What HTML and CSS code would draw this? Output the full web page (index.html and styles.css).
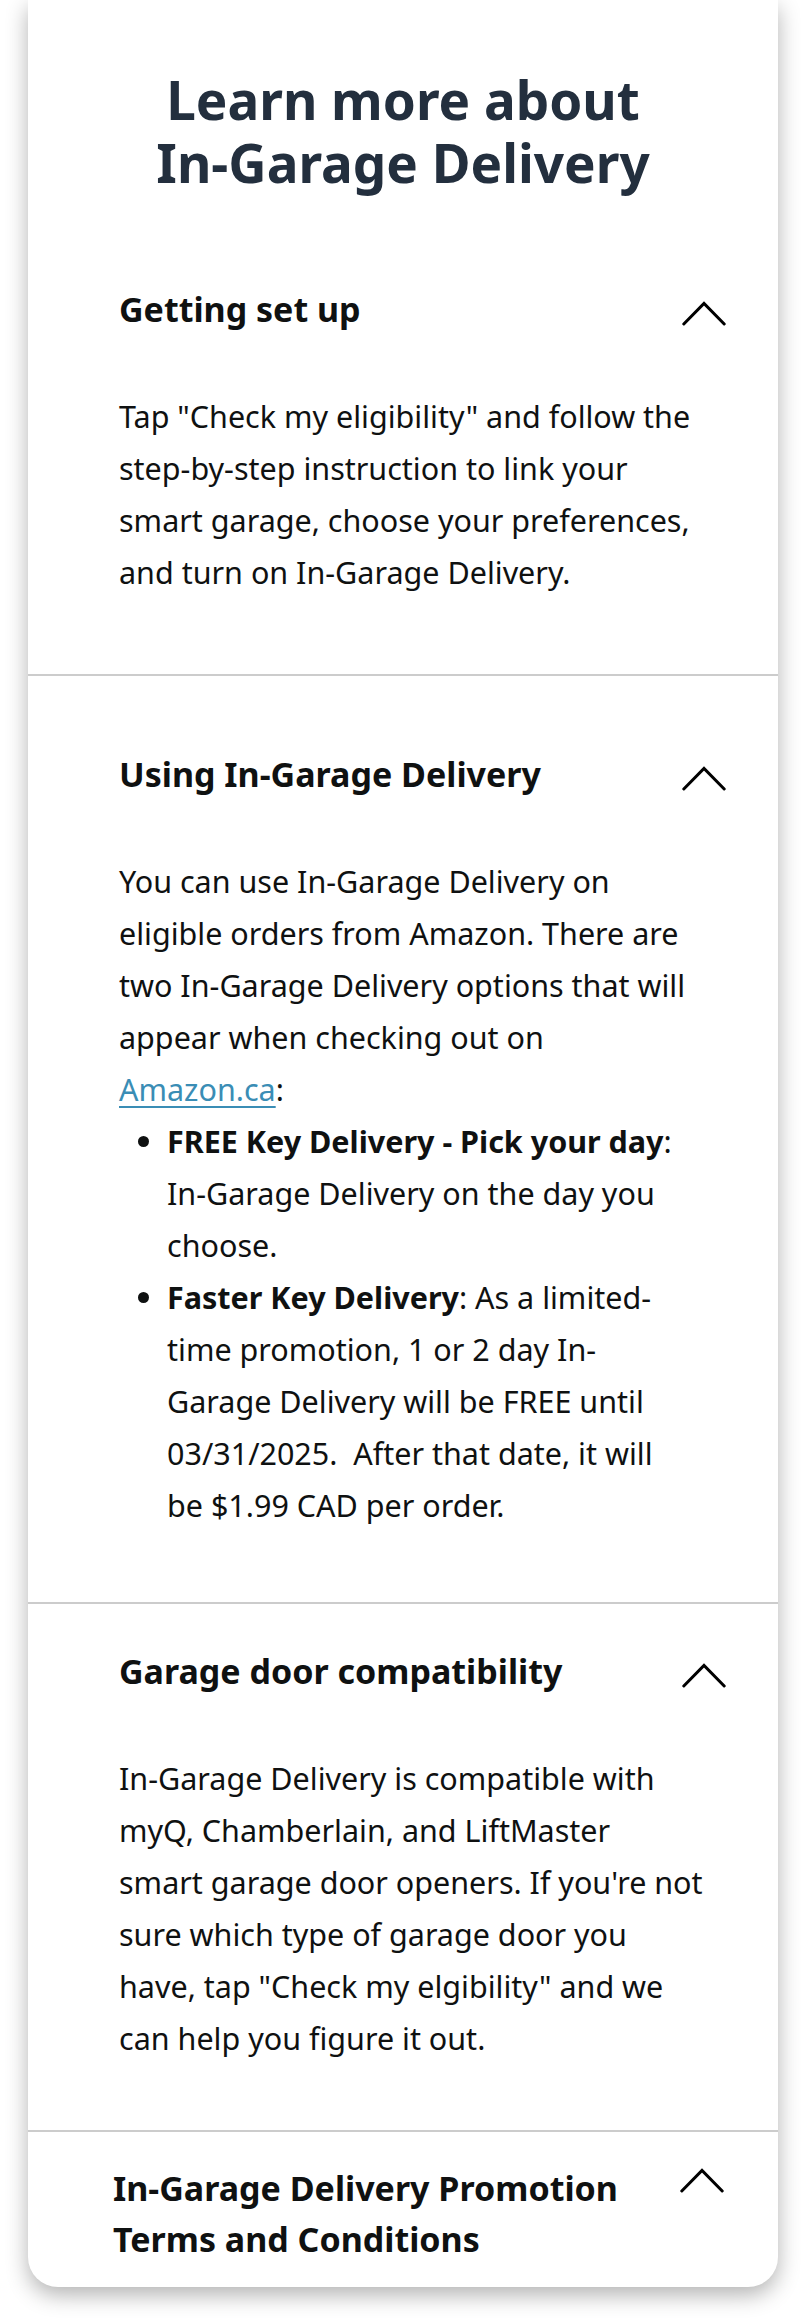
FILE: index.html
```html
<!DOCTYPE html>
<html lang="en">
<head>
<meta charset="utf-8">
<title>Learn more about In-Garage Delivery</title>
<link rel="stylesheet" href="styles.css">
</head>
<body>
<main class="card">
  <h1 class="title">Learn more about In-Garage Delivery</h1>

  <section class="faq faq--first">
    <div class="faq-head">
      <h2 class="faq-title">Getting set up</h2>
      <svg class="chevron" viewBox="0 0 44 25" width="44" height="25" aria-hidden="true"><polyline points="1.8,23 22,2.5 42.2,23"/></svg>
    </div>
    <p class="faq-body">Tap "Check my eligibility" and follow the<br>step-by-step instruction to link your<br>smart garage, choose your preferences,<br>and turn on In-Garage Delivery.</p>
  </section>

  <section class="faq faq--second">
    <div class="faq-head">
      <h2 class="faq-title">Using In-Garage Delivery</h2>
      <svg class="chevron" viewBox="0 0 44 25" width="44" height="25" aria-hidden="true"><polyline points="1.8,23 22,2.5 42.2,23"/></svg>
    </div>
    <div class="faq-body">
      <p>You can use In-Garage Delivery on<br>eligible orders from Amazon. There are<br>two In-Garage Delivery options that will<br>appear when checking out on<br><a class="link" href="#">Amazon.ca</a>:</p>
      <ul class="options">
        <li><b>FREE Key Delivery - Pick your day</b>:<br>In-Garage Delivery on the day you<br>choose.</li>
        <li><b>Faster Key Delivery</b>: As a limited-<br>time promotion, 1 or 2 day In-<br>Garage Delivery will be FREE until<br>03/31/2025.&nbsp; After that date, it will<br>be $1.99 CAD per order.</li>
      </ul>
    </div>
  </section>

  <section class="faq faq--third">
    <div class="faq-head">
      <h2 class="faq-title">Garage door compatibility</h2>
      <svg class="chevron" viewBox="0 0 44 25" width="44" height="25" aria-hidden="true"><polyline points="1.8,23 22,2.5 42.2,23"/></svg>
    </div>
    <p class="faq-body">In-Garage Delivery is compatible with<br>myQ, Chamberlain, and LiftMaster<br>smart garage door openers. If you're not<br>sure which type of garage door you<br>have, tap "Check my elgibility" and we<br>can help you figure it out.</p>
  </section>

  <section class="faq faq--last">
    <div class="faq-head">
      <h2 class="faq-title">In-Garage Delivery Promotion Terms and Conditions</h2>
      <svg class="chevron" viewBox="0 0 44 25" width="44" height="25" aria-hidden="true"><polyline points="1.8,23 22,2.5 42.2,23"/></svg>
    </div>
  </section>
</main>
</body>
</html>
```
FILE: styles.css
```css
html, body {
  margin: 0;
  padding: 0;
  background: #ffffff;
}

body {
  font-family: "Noto Sans", "Open Sans", sans-serif;
  color: #0f1111;
  padding-bottom: 37px;
}

.card {
  margin: 0 28px;
  background: #ffffff;
  border-radius: 0 0 30px 30px;
  box-shadow: 0 8px 22px rgba(0, 0, 0, 0.3);
}

.title {
  margin: 0;
  padding: 68px 100px 0;
  text-align: center;
  font-size: 53px;
  line-height: 63px;
  font-weight: 700;
  color: #232f3e;
}

.faq {
  padding: 0 52px 0 91px;
}

.faq + .faq {
  border-top: 2px solid #cccccc;
}

.faq--first { padding-top: 90px; padding-bottom: 76px; }
.faq--second { padding-top: 73px; padding-bottom: 71px; }
.faq--third { padding-top: 42px; padding-bottom: 66px; }
.faq--last { padding: 31px 54px 22px 85px; }

.faq-head {
  display: flex;
  justify-content: space-between;
  align-items: flex-start;
  gap: 24px;
}

.faq-title {
  margin: 0;
  font-size: 34px;
  line-height: 51px;
  font-weight: 700;
  color: #0f1111;
}

.chevron {
  flex: none;
  margin-top: 17px;
  fill: none;
  stroke: #000000;
  stroke-width: 3;
  stroke-linecap: round;
  stroke-linejoin: miter;
}

.faq--last .chevron {
  margin-top: 5px;
}

.faq-body {
  margin: 55px 0 0;
  font-size: 30.5px;
  line-height: 52px;
  white-space: nowrap;
}

.faq-body p {
  margin: 0;
}

.link {
  color: #3a8db5;
  text-decoration: underline;
  text-decoration-thickness: 2px;
  text-underline-offset: 5px;
}

.options {
  margin: 0;
  padding-left: 48px;
}

.options b {
  font-weight: 700;
}
```
